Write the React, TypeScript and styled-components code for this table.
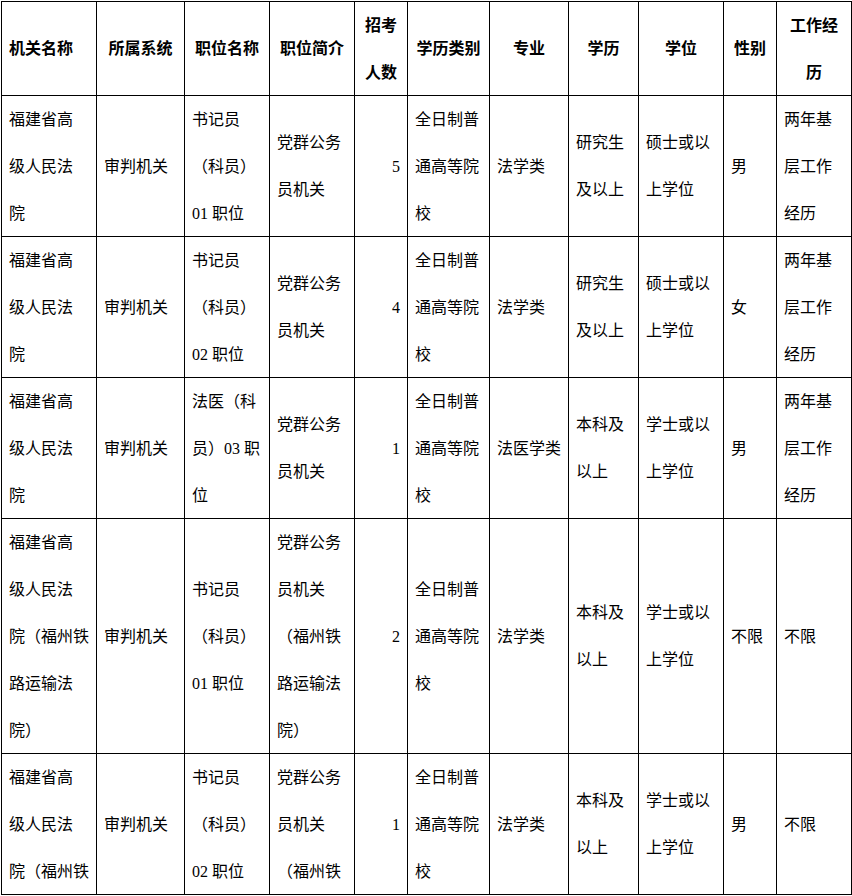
import React from 'react'
import styled, { createGlobalStyle } from 'styled-components'

const GlobalStyle = createGlobalStyle`
    html, body {
        margin: 0;
        padding: 0;
        background: #ffffff;
    }
    body {
        font-family: "Liberation Serif", "Noto Sans CJK SC", serif;
        color: #000000;
        text-spacing-trim: space-all;
    }
`

const COLUMNS = '95px 88px 85px 85px 53px 82px 79px 70px 85px 53px 75px'

type Align = 'left' | 'center' | 'right'

const Table = styled.div`
    display: flex;
    flex-direction: column;
    width: 850px;
    margin: 1px 0 0 1px;
    border-left: 1px solid #000;
    border-top: 1px solid #000;
`

const Row = styled.div<{ $h: number }>`
    display: grid;
    grid-template-columns: ${COLUMNS};
    height: ${props => props.$h}px;
    box-sizing: border-box;
    border-bottom: 1px solid #000;
`

const Cell = styled.div<{ $align: Align; $bold?: boolean }>`
    display: flex;
    flex-direction: column;
    justify-content: center;
    align-items: ${props =>
        props.$align === 'right' ? 'flex-end' : props.$align === 'center' ? 'center' : 'flex-start'};
    box-sizing: border-box;
    padding: 0 7px;
    border-right: 1px solid #000;
    overflow: hidden;
    font-size: 16px;
    line-height: 47px;
    font-weight: ${props => (props.$bold ? 700 : 400)};
    white-space: nowrap;
    text-spacing-trim: space-all;
`

const Line = styled.span`
    display: block;
`

type CellData = { lines: string[]; align?: Align }

const header: CellData[] = [
    { lines: ['机关名称'], align: 'left' },
    { lines: ['所属系统'] },
    { lines: ['职位名称'] },
    { lines: ['职位简介'] },
    { lines: ['招考', '人数'] },
    { lines: ['学历类别'] },
    { lines: ['专业'] },
    { lines: ['学历'] },
    { lines: ['学位'] },
    { lines: ['性别'] },
    { lines: ['工作经', '历'] },
]

const court = ['福建省高', '级人民法', '院']
const school = ['全日制普', '通高等院', '校']
const party = ['党群公务', '员机关']
const experience = ['两年基', '层工作', '经历']

const rows: { h: number; cells: string[][] }[] = [
    {
        h: 141,
        cells: [court, ['审判机关'], ['书记员', '（科员）', '01 职位'], party, ['5'], school, ['法学类'], ['研究生', '及以上'], ['硕士或以', '上学位'], ['男'], experience],
    },
    {
        h: 141,
        cells: [court, ['审判机关'], ['书记员', '（科员）', '02 职位'], party, ['4'], school, ['法学类'], ['研究生', '及以上'], ['硕士或以', '上学位'], ['女'], experience],
    },
    {
        h: 141,
        cells: [court, ['审判机关'], ['法医（科', '员）03 职', '位'], party, ['1'], school, ['法医学类'], ['本科及', '以上'], ['学士或以', '上学位'], ['男'], experience],
    },
    {
        h: 235,
        cells: [
            ['福建省高', '级人民法', '院（福州铁', '路运输法', '院）'],
            ['审判机关'],
            ['书记员', '（科员）', '01 职位'],
            ['党群公务', '员机关', '（福州铁', '路运输法', '院）'],
            ['2'],
            school,
            ['法学类'],
            ['本科及', '以上'],
            ['学士或以', '上学位'],
            ['不限'],
            ['不限'],
        ],
    },
    {
        h: 141,
        cells: [
            ['福建省高', '级人民法', '院（福州铁'],
            ['审判机关'],
            ['书记员', '（科员）', '02 职位'],
            ['党群公务', '员机关', '（福州铁'],
            ['1'],
            school,
            ['法学类'],
            ['本科及', '以上'],
            ['学士或以', '上学位'],
            ['男'],
            ['不限'],
        ],
    },
]

const App: React.FC = () => {
    return (
        <>
            <GlobalStyle />
            <Table>
                <Row $h={94}>
                    {header.map((c, i) => (
                        <Cell key={i} $align={c.align ?? 'center'} $bold>
                            {c.lines.map((l, j) => (
                                <Line key={j}>{l}</Line>
                            ))}
                        </Cell>
                    ))}
                </Row>
                {rows.map((r, i) => (
                    <Row key={i} $h={r.h}>
                        {r.cells.map((lines, j) => (
                            <Cell key={j} $align={j === 4 ? 'right' : 'left'}>
                                {lines.map((l, k) => (
                                    <Line key={k}>{l}</Line>
                                ))}
                            </Cell>
                        ))}
                    </Row>
                ))}
            </Table>
        </>
    )
}

export default App
